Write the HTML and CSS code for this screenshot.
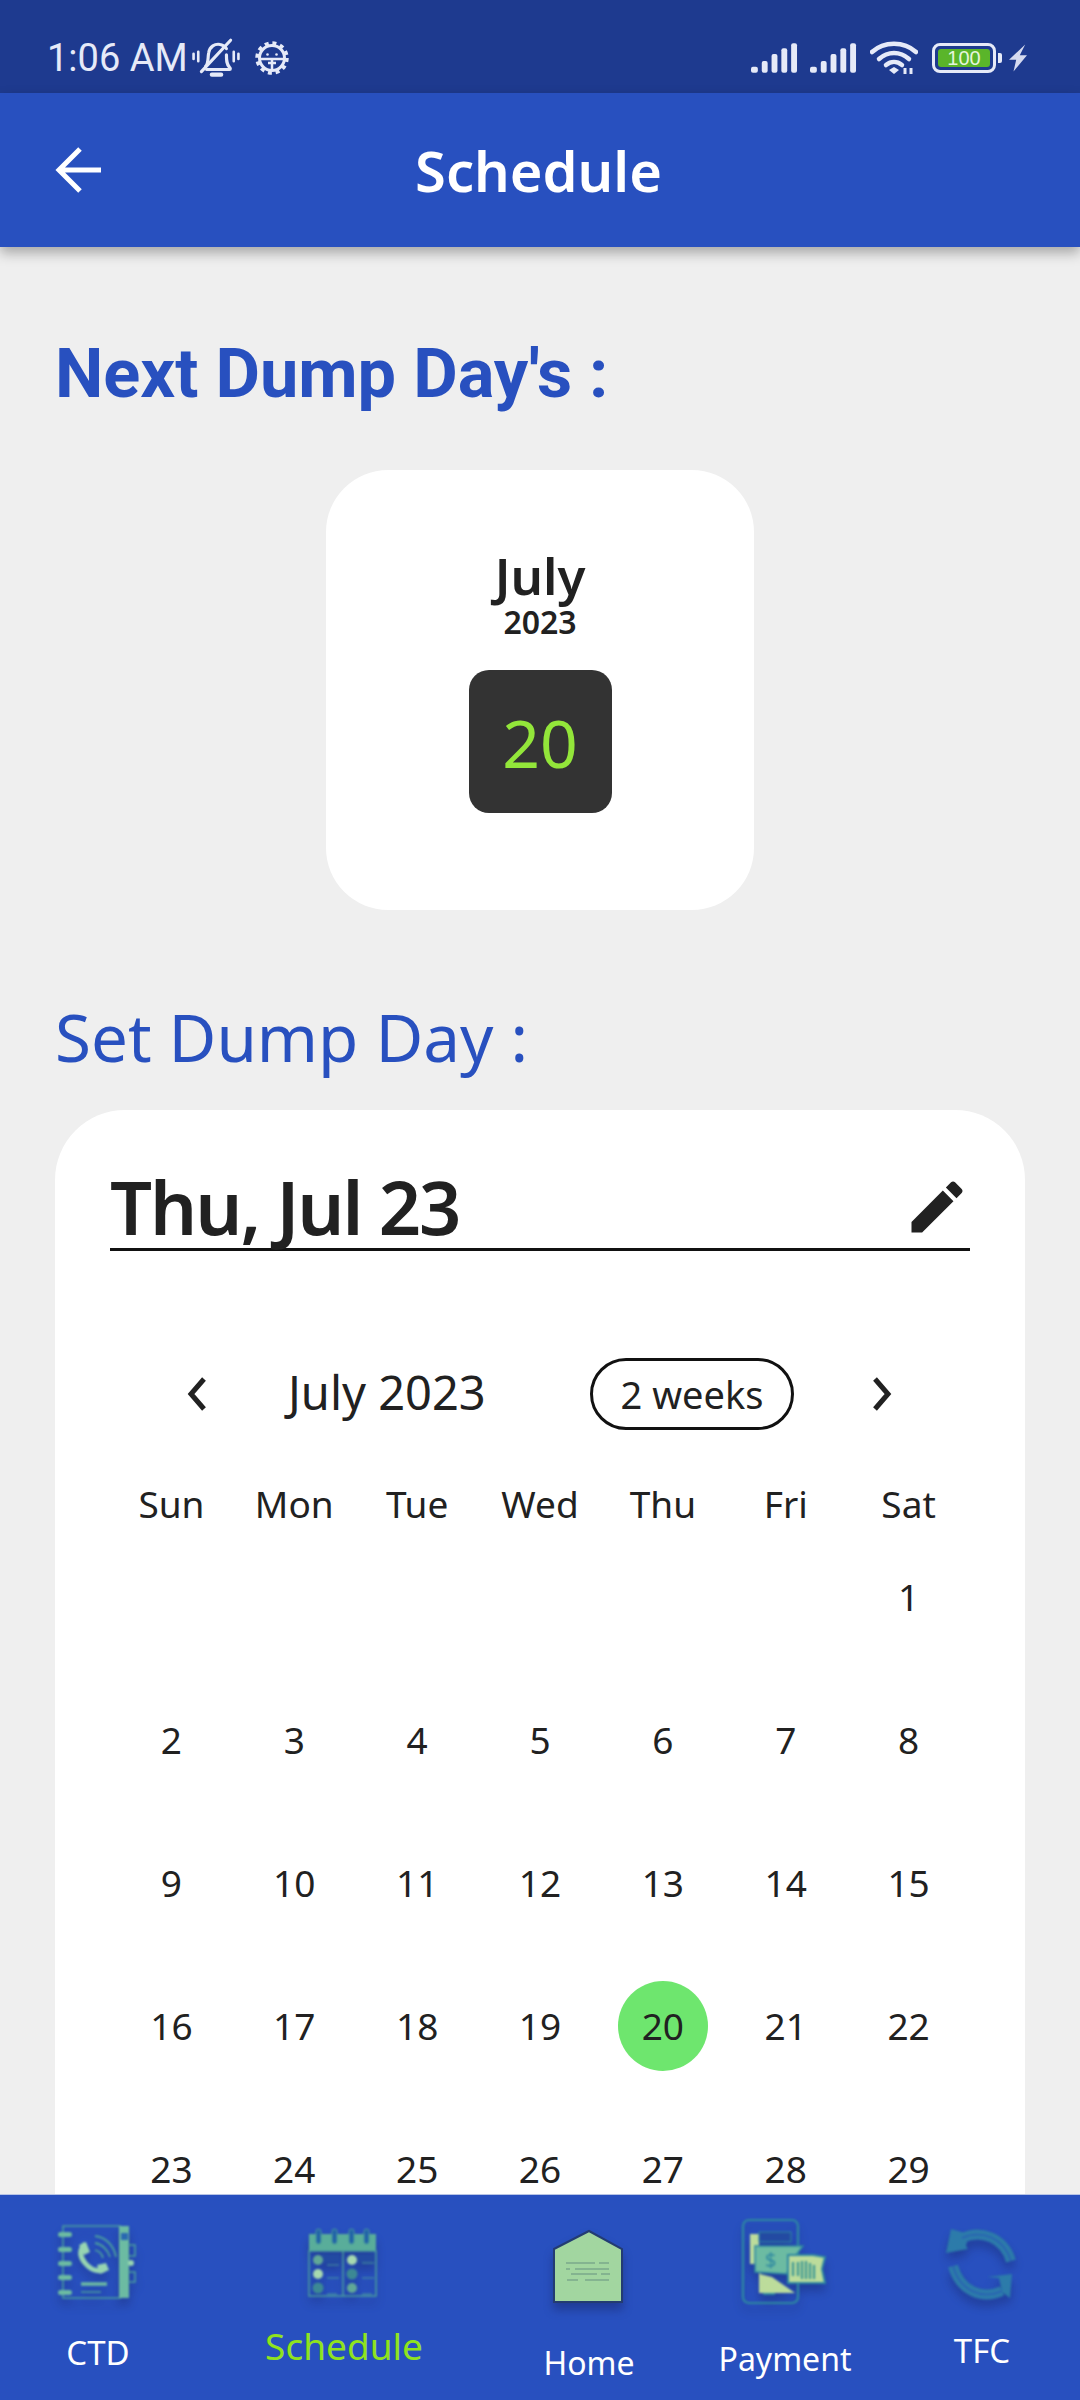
FILE: index.html
```html
<!DOCTYPE html>
<html lang="en">
<head>
    <meta charset="UTF-8">
    <meta name="viewport" content="width=device-width, initial-scale=1.0">
    <title>Schedule</title>
    <link rel="stylesheet" href="styles.css">
</head>
<body>
    <div class="status-bar">
        <div class="status-left">
            <span class="clock">1:06 AM</span>
            <svg class="bell-icon" viewBox="0 0 46 40" fill="none" stroke="#e6eaf8" stroke-width="3" stroke-linecap="round">
                <path d="M13 28c3-3 2-8 3-13 1-6 6-9 11-8 3 .5 5 2 6 4M33 17c0 5 0 9 3 12 1 1 1 2 0 2H14"/>
                <path d="M9 33L37 3"/>
                <path d="M19 36h9" stroke-width="4"/>
                <path d="M6 14v9M1.500 16v5M40 14v9M44.500 16v5" stroke-width="2.500"/>
            </svg>
            <svg class="gear-icon" viewBox="0 0 36 36" fill="none" stroke="#e6eaf8">
                <circle cx="18" cy="18" r="12.500" stroke-width="3"/>
                <circle cx="18" cy="18" r="15" stroke-width="3.500" stroke-dasharray="4 3.850"/>
                <path d="M6 19h24M18 19v10M14 23h8" stroke-width="2.500"/>
                <circle cx="13.500" cy="14.500" r="1.300" fill="#e6eaf8" stroke="none"/>
                <circle cx="22.500" cy="14.500" r="1.300" fill="#e6eaf8" stroke="none"/>
            </svg>
        </div>
        <div class="status-right">
            <svg class="signal-icon" viewBox="0 0 48 30" fill="#e6eaf8">
                <rect x="0" y="24" width="7" height="6" rx="2"/>
                <rect x="11" y="18" width="6" height="12" rx="2"/>
                <rect x="21" y="11" width="6" height="19" rx="2"/>
                <rect x="31" y="5" width="6" height="25" rx="2"/>
                <rect x="41" y="0" width="6" height="30" rx="2"/>
            </svg>
            <svg class="signal-icon" viewBox="0 0 48 30" fill="#e6eaf8">
                <rect x="0" y="24" width="7" height="6" rx="2"/>
                <rect x="11" y="18" width="6" height="12" rx="2"/>
                <rect x="21" y="11" width="6" height="19" rx="2"/>
                <rect x="31" y="5" width="6" height="25" rx="2"/>
                <rect x="41" y="0" width="6" height="30" rx="2"/>
            </svg>
            <svg class="wifi-icon" viewBox="0 0 48 34" fill="none" stroke="#e6eaf8" stroke-width="4.500" stroke-linecap="round">
                <path d="M2 11C14 0 34 0 46 11"/>
                <path d="M9 18c9-8 21-8 30 0"/>
                <path d="M16 24c5-4 11-4 16 0"/>
                <path d="M19 29l5-3 5 3-5 4z" fill="#e6eaf8" stroke="none"/>
                <path d="M35 27v6M41 27v6" stroke-width="3" stroke-linecap="butt"/>
            </svg>
            <div class="battery">
                <div class="battery-box"><span class="battery-fill">100</span></div>
                <span class="battery-nub"></span>
            </div>
            <svg class="bolt-icon" viewBox="0 0 20 30" fill="#d5daf0"><path d="M18 0L0 17h8L5 30l15-18h-8z"/></svg>
        </div>
    </div>

    <header class="app-bar">
        <svg class="back-icon" viewBox="0 0 46 46" fill="none" stroke="#fff" stroke-width="5">
            <path d="M46 23H4M25 2L4 23l21 21"/>
        </svg>
        <h1>Schedule</h1>
    </header>

    <main class="content">
        <h2 class="next-title">Next Dump Day's :</h2>

        <div class="next-card">
            <p class="next-month">July</p>
            <p class="next-year">2023</p>
            <div class="next-day">20</div>
        </div>

        <h2 class="set-title">Set Dump Day :</h2>

        <section class="calendar-card">
            <div class="date-field">
                <span class="date-value">Thu, Jul 23</span>
                <svg class="edit-icon" viewBox="0 0 24 24" fill="#212121">
                    <path d="M3 17.250V21h3.750L17.810 9.940l-3.750-3.750L3 17.250zM20.710 7.040c.39-.39.39-1.020 0-1.410l-2.340-2.340c-.39-.39-1.020-.39-1.410 0l-1.830 1.830 3.750 3.750 1.830-1.830z"/>
                </svg>
            </div>

            <div class="month-row">
                <svg class="chevron" viewBox="0 0 24 36" fill="none" stroke="#212121" stroke-width="5"><path d="M19 3L6 18l13 15"/></svg>
                <span class="month-label">July 2023</span>
                <span class="format-button">2 weeks</span>
                <svg class="chevron" viewBox="0 0 24 36" fill="none" stroke="#212121" stroke-width="5"><path d="M5 3l13 15L5 33"/></svg>
            </div>

            <div class="week-days">
                <span>Sun</span><span>Mon</span><span>Tue</span><span>Wed</span><span>Thu</span><span>Fri</span><span>Sat</span>
            </div>

            <div class="days">
                <span></span><span></span><span></span><span></span><span></span><span></span><span>1</span>
                <span>2</span><span>3</span><span>4</span><span>5</span><span>6</span><span>7</span><span>8</span>
                <span>9</span><span>10</span><span>11</span><span>12</span><span>13</span><span>14</span><span>15</span>
                <span>16</span><span>17</span><span>18</span><span>19</span><span><b class="selected">20</b></span><span>21</span><span>22</span>
                <span>23</span><span>24</span><span>25</span><span>26</span><span>27</span><span>28</span><span>29</span>
            </div>
        </section>
    </main>

    <nav class="bottom-nav">
        <a class="nav-item nav-ctd">
            <svg class="nav-icon" viewBox="0 0 100 100" fill="none">
                <rect x="15" y="11" width="57" height="72" stroke="#4fa69a" stroke-width="1.500"/>
                <rect x="71" y="11" width="10" height="72" fill="#74c79f"/>
                <rect x="73" y="18" width="7" height="7" fill="#2a6bb0"/>
                <path d="M80 30h7v11h-7M80 57h7v10h-7" stroke="#4fa69a" stroke-width="1.500"/>
                <circle cx="83" cy="48" r="3" fill="#a4e4b0"/>
                <g fill="#74c79f">
                    <rect x="10" y="17" width="14" height="5" rx="2.500"/>
                    <rect x="10" y="32" width="14" height="5" rx="2.500"/>
                    <rect x="10" y="46" width="14" height="5" rx="2.500"/>
                    <rect x="10" y="60" width="14" height="5" rx="2.500"/>
                    <rect x="10" y="75" width="14" height="5" rx="2.500"/>
                </g>
                <path d="M36 30c-5 6-4 12 1 18 5 6 11 9 18 7" stroke="#a4e4b0" stroke-width="5" stroke-linecap="round"/>
                <path d="M31 30l7-3 4 10-6 3zM49 50l9-2 3 7-9 4z" fill="#a4e4b0"/>
                <path d="M47 35c4 1 7 4 8 8M47 28c7 1 13 7 15 14M47 21c11 1 19 10 21 21" stroke="#4fa69a" stroke-width="1.800"/>
                <path d="M33 69h26" stroke="#74c79f" stroke-width="3.500"/>
                <path d="M33 77h20" stroke="#4fa69a" stroke-width="1.500"/>
            </svg>
            <span class="nav-label">CTD</span>
        </a>
        <a class="nav-item nav-schedule">
            <svg class="nav-icon" viewBox="0 0 100 100" fill="none">
                <rect x="15" y="19" width="67" height="17" fill="#5fb896"/>
                <rect x="15" y="36" width="67" height="45" stroke="#4fa69a" stroke-width="1.500"/>
                <path d="M49 36v45" stroke="#4fa69a" stroke-width="1.500"/>
                <rect x="28" y="39" width="18" height="9" fill="#234a9f"/>
                <rect x="63" y="39" width="17" height="9" fill="#234a9f"/>
                <g fill="#1f63a6" stroke="#4fa69a" stroke-width="1">
                    <rect x="22" y="14" width="5" height="15" rx="2.500"/>
                    <rect x="38" y="14" width="5" height="15" rx="2.500"/>
                    <rect x="55" y="14" width="5" height="15" rx="2.500"/>
                    <rect x="70" y="14" width="5" height="15" rx="2.500"/>
                </g>
                <circle cx="24" cy="45" r="5" fill="#68b292"/>
                <circle cx="58" cy="45" r="5" fill="#b5e8ae"/>
                <circle cx="24" cy="59" r="5" fill="#b5e8ae"/>
                <circle cx="58" cy="59" r="5.500" fill="#3f8f90"/>
                <circle cx="24" cy="73" r="5.500" fill="#3f8f90"/>
                <circle cx="58" cy="73" r="5" fill="#68b292"/>
                <path d="M33 50h12M68 48h12M33 63h12M68 63h12M33 79h10M68 79h10" stroke="#4fa69a" stroke-width="1.200"/>
            </svg>
            <span class="nav-label">Schedule</span>
        </a>
        <a class="nav-item nav-home">
            <svg class="nav-icon nav-icon-sharp" viewBox="0 0 100 100" fill="none">
                <path d="M15 34L50 16l33 18v53H15z" fill="#a2d6a0" stroke="#233c72" stroke-width="2"/>
                <path d="M27 48h29M60 48h10M27 54h4M36 54h34M32 59h26M62 59h9M28 65h11M46 65h24" stroke="#7ba98a" stroke-width="1.500"/>
            </svg>
            <span class="nav-label">Home</span>
        </a>
        <a class="nav-item nav-payment">
            <svg class="nav-icon" viewBox="0 0 100 100" fill="none">
                <rect x="8" y="5" width="55" height="83" rx="6" stroke="#2f8f9e" stroke-width="2.200"/>
                <path d="M15 19h9v59h36l-10-7-13-9-12-3v-10h-10z" fill="#cdec98"/>
                <rect x="24" y="17" width="32" height="10" fill="#234a9f" stroke="#2f8f9e"/>
                <path d="M20 31h48l-14 18 -2 10-32-2z" fill="#74c79f" stroke="#2f8f9e" stroke-width="1.500"/>
                <path d="M53 40h25l12 2-3 12 3 14H53z" fill="#cdec98" stroke="#2f8f9e" stroke-width="2"/>
                <path d="M58 47v14M63 47v14M67 46v18M71 46v18M75 48v16M79 50v14" stroke="#3f9f8f" stroke-width="2.200"/>
                <path d="M28 79h12" stroke="#2f8f9e" stroke-width="2"/>
                <text class="dollar" x="30" y="52">$</text>
            </svg>
            <span class="nav-label">Payment</span>
        </a>
        <a class="nav-item nav-tfc">
            <svg class="nav-icon" viewBox="0 0 100 100" fill="none">
                <path d="M30 23c20-9 42 0 49 23" stroke="#2d80a8" stroke-width="10"/>
                <path d="M19 14l18 5-3 12 2 3-22 4z" fill="#2d80a8"/>
                <path d="M70 76c-20 9-42 0-49-25" stroke="#2d80a8" stroke-width="10"/>
                <path d="M80 59l-2 24-8-6-3-14-12-1z" fill="#2d80a8"/>
                <path d="M30 23c20-9 42 0 49 23M70 76c-20 9-42 0-49-25" stroke="#2a62b4" stroke-width="1.500"/>
            </svg>
            <span class="nav-label">TFC</span>
        </a>
    </nav>
</body>
</html>
```

FILE: styles.css
```css
* {
    margin: 0;
    padding: 0;
    box-sizing: border-box;
}

body {
    font-family: "Noto Sans", sans-serif;
    background: #efefef;
    color: #212121;
    display: flex;
    flex-direction: column;
    width: 1080px;
    height: 2400px;
    overflow: hidden;
}

/* status bar */
.status-bar {
    background: #1e3a8f;
    height: 93px;
    flex-shrink: 0;
    display: flex;
    justify-content: space-between;
    align-items: center;
    padding: 22px 53px 0 47px;
}

.status-left,
.status-right {
    display: flex;
    align-items: center;
}

.clock {
    font-family: Roboto, sans-serif;
    font-size: 38px;
    color: #e6eaf8;
}

.bell-icon {
    width: 48px;
    height: 42px;
    margin-left: 4px;
}

.gear-icon {
    width: 36px;
    height: 36px;
    margin-left: 14px;
}

.signal-icon {
    width: 47px;
    height: 30px;
    margin-right: 12px;
}

.wifi-icon {
    width: 48px;
    height: 34px;
    margin-left: 1px;
    margin-right: 14px;
}

.battery {
    display: flex;
    align-items: center;
    gap: 2px;
}

.battery-box {
    width: 64px;
    height: 30px;
    border: 3px solid #e6eaf8;
    border-radius: 8px;
    padding: 3px;
    display: flex;
}

.battery-fill {
    flex: 1;
    background: #5ab52a;
    border-radius: 3px;
    color: #e6f5dc;
    font-family: "Liberation Sans", sans-serif;
    font-size: 20px;
    line-height: 18px;
    text-align: center;
}

.battery-nub {
    width: 4px;
    height: 10px;
    background: #e6eaf8;
    border-radius: 0 2px 2px 0;
}

.bolt-icon {
    width: 18px;
    height: 30px;
    margin-left: 7px;
}

/* app bar */
.app-bar {
    position: relative;
    z-index: 1;
    background: #2850bf;
    height: 154px;
    flex-shrink: 0;
    display: flex;
    align-items: center;
    padding-left: 55px;
    box-shadow: 0 6px 12px rgba(0, 0, 0, 0.3);
}

.back-icon {
    width: 46px;
    height: 46px;
}

.app-bar h1 {
    flex: 1;
    text-align: center;
    color: #fff;
    font-size: 56px;
    font-weight: 600;
    padding-right: 104px;
}

/* content */
.content {
    flex: 1;
    min-height: 0;
    overflow: hidden;
    padding: 89px 55px 0;
}

.next-title {
    font-family: Roboto, sans-serif;
    font-size: 68.500px;
    line-height: 76px;
    font-weight: 700;
    color: #2850bf;
}

.next-card {
    width: 428px;
    height: 440px;
    margin: 58px auto 0;
    background: #fff;
    border-radius: 62px;
    display: flex;
    flex-direction: column;
    align-items: center;
    padding-top: 78px;
}

.next-month {
    font-size: 51px;
    line-height: 54px;
    font-weight: 600;
}

.next-year {
    font-size: 32px;
    line-height: 40px;
    font-weight: 600;
}

.next-day {
    width: 143px;
    height: 143px;
    margin-top: 28px;
    background: #333;
    border-radius: 20px;
    color: #93e63a;
    font-size: 66px;
    display: flex;
    justify-content: center;
    align-items: center;
}

.set-title {
    margin-top: 87px;
    font-size: 65.500px;
    line-height: 80px;
    font-weight: 400;
    color: #2850bf;
}

.calendar-card {
    margin-top: 33px;
    background: #fff;
    border-radius: 70px 70px 0 0;
    padding: 0 55px;
    height: 1200px;
}

.date-field {
    height: 141px;
    border-bottom: 3px solid #111;
    display: flex;
    justify-content: space-between;
    align-items: flex-end;
}

.date-value {
    font-size: 74px;
    line-height: 82px;
    font-weight: 600;
    letter-spacing: -2px;
}

.edit-icon {
    width: 68px;
    height: 68px;
    margin-right: -1px;
    margin-bottom: 7px;
}

.month-row {
    display: flex;
    align-items: center;
    margin-top: 107px;
    height: 72px;
}

.chevron {
    width: 24px;
    height: 36px;
}

.month-row .chevron:first-child {
    margin-left: 75px;
}

.month-label {
    font-size: 47px;
    line-height: 68px;
    margin-bottom: 4px;
    margin-left: 79px;
    width: 302px;
}

.format-button {
    width: 204px;
    height: 72px;
    border: 3px solid #111;
    border-radius: 36px;
    font-size: 38px;
    display: flex;
    justify-content: center;
    align-items: center;
}

.format-button + .chevron {
    margin-left: 76px;
}

.week-days,
.days {
    display: grid;
    grid-template-columns: repeat(7, 1fr);
    text-align: center;
}

.week-days {
    margin-top: 49px;
    font-size: 37px;
    line-height: 50px;
}

.days {
    margin-top: -4px;
    grid-auto-rows: 143px;
    font-size: 37px;
}

.days span {
    display: flex;
    justify-content: center;
    align-items: center;
}

.selected {
    width: 90px;
    height: 90px;
    border-radius: 50%;
    background: #6ee66e;
    font-weight: 400;
    display: flex;
    justify-content: center;
    align-items: center;
}

/* bottom nav */
.bottom-nav {
    height: 206px;
    flex-shrink: 0;
    background: #2850bf;
    border-top: 1px solid #b8c4e6;
    display: flex;
}

.nav-item {
    display: flex;
    flex-direction: column;
    align-items: center;
    padding-top: 20px;
    color: #fff;
}

.nav-icon {
    width: 100px;
    height: 100px;
    flex-shrink: 0;
    opacity: 0.9;
    filter: blur(1px) drop-shadow(0 7px 5px rgba(20, 30, 90, 0.4));
}

.nav-icon-sharp {
    opacity: 1;
    filter: blur(0.6px) drop-shadow(0 7px 5px rgba(20, 30, 90, 0.4));
}

.dollar {
    font-family: "Noto Sans", sans-serif;
    font-size: 20px;
    fill: #2f8f9e;
}

.nav-label {
    font-size: 33px;
    line-height: 44px;
}

.nav-ctd {
    width: 196px;
}

.nav-ctd .nav-label {
    margin-top: 16px;
}

.nav-schedule {
    width: 296px;
}

.nav-schedule .nav-label {
    margin-top: 9px;
    font-size: 37px;
    color: #8fe31e;
}

.nav-home {
    width: 194px;
}

.nav-home .nav-label {
    margin-top: 26px;
    font-size: 32px;
}

.nav-payment {
    width: 198px;
}

.nav-payment .nav-label {
    margin-top: 22px;
    font-size: 32px;
}

.nav-tfc {
    width: 196px;
}

.nav-tfc .nav-label {
    margin-top: 14px;
}
```
